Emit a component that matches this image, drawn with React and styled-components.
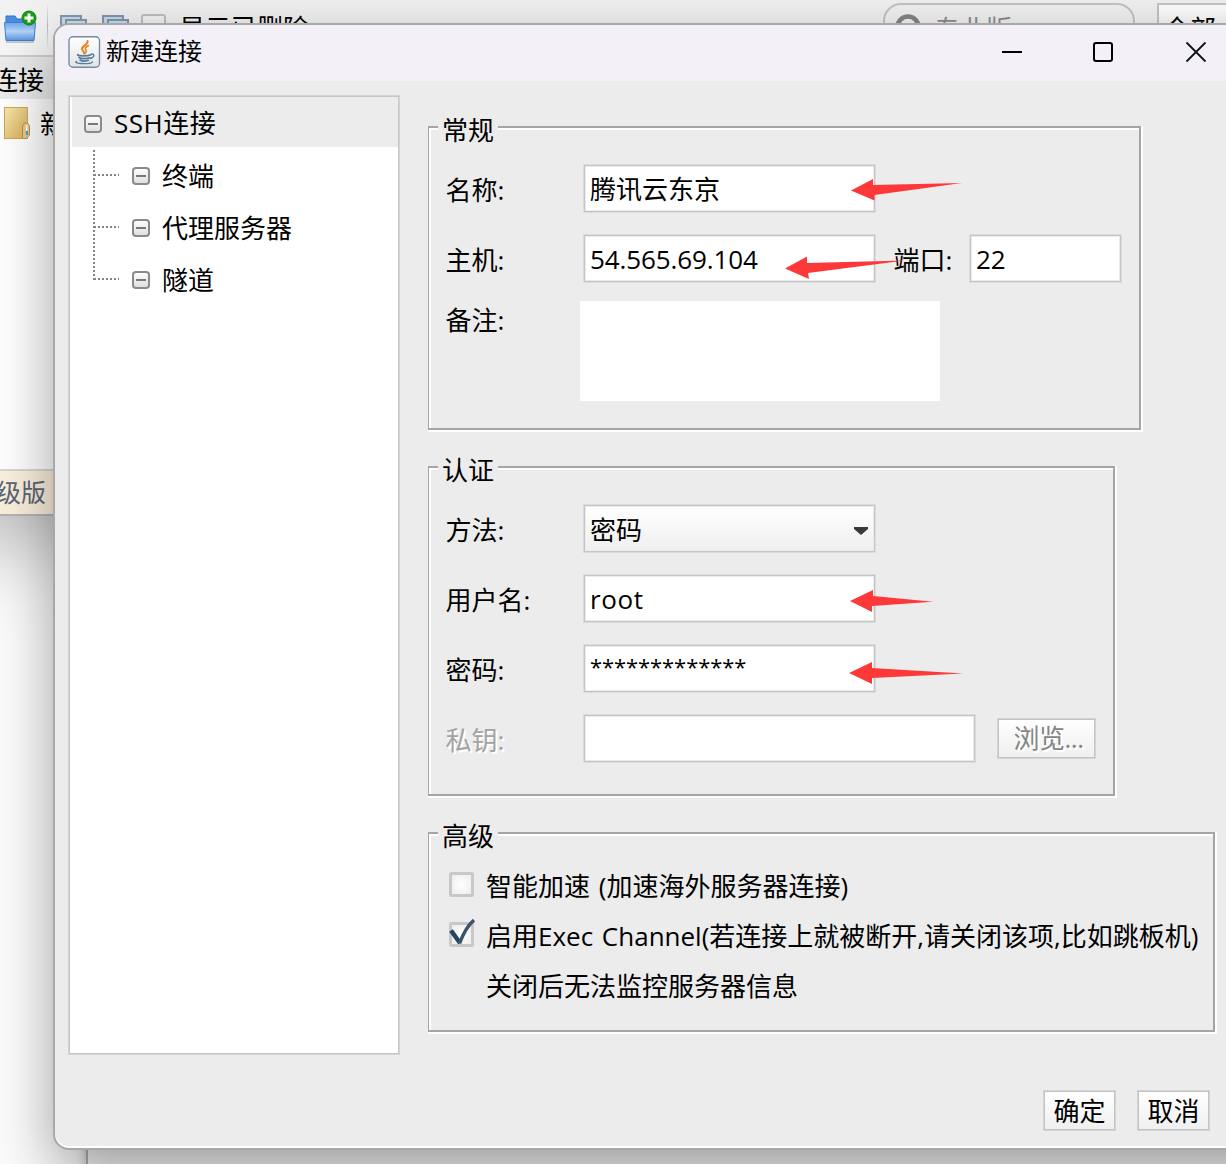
import React, { Component } from 'react'
import styled, { createGlobalStyle } from 'styled-components'

const GlobalStyle = createGlobalStyle`
  * {
    box-sizing: border-box;
  }

  body {
    margin: 0;
    overflow: hidden;
    font-family: "Open Sans", "Noto Sans CJK SC", sans-serif;
    font-size: 26px;
    color: #000;
  }
`

const Desktop = styled.div`
  background: #fcfcfc;
  height: 1164px;
  overflow: hidden;
  position: relative;
  width: 1226px;
`

const MainWindow = styled.div`
  background: #fff;
  border-bottom: 2px solid #b4b4b4;
  box-shadow: 0 28px 80px rgba(0, 0, 0, 0.26);
  display: flex;
  flex-direction: column;
  height: 516px;
  margin-left: -60px;
  padding-left: 60px;
  width: 1400px;
`

const LowerWindow = styled.div`
  background: #f6f6f6;
  border-left: 2px solid #b0b0b0;
  box-shadow: 0 0 10px rgba(0, 0, 0, 0.25);
  height: 700px;
  margin: 84px 0 0 86px;
`

const MainToolbar = styled.div`
  background: linear-gradient(#f1f1f1, #f6f6f6);
  border-bottom: 2px solid #cfcfcf;
  display: flex;
  height: 57px;
  line-height: 57px;
  padding-left: 4px;
  white-space: nowrap;

  > svg {
    flex: none;
  }
`

const ToolbarDivider = styled.div`
  background: linear-gradient(transparent, #b5bcc6 50%, transparent);
  height: 48px;
  margin: 2px 12px 0 9px;
  width: 1px;
`

const ToolbarCheck = styled.div`
  background: #f5f5f5;
  border: 2px solid #c0c0c0;
  border-radius: 3px;
  height: 25px;
  margin: 14px 13px 0 -3px;
  width: 25px;
`

const SearchBox = styled.div`
  border: 2px solid #c4c4c4;
  border-radius: 18px;
  color: #8d8d8d;
  display: flex;
  height: 48px;
  line-height: 49px;
  margin: 3px 0 0 auto;
  padding-left: 10px;
  width: 252px;

  svg {
    margin-right: 11px;
  }
`

const ScopeSelect = styled.div`
  background: linear-gradient(#fff, #f2f2f2);
  border: 2px solid #c4c4c4;
  height: 48px;
  line-height: 49px;
  margin: 3px 3px 0 22px;
  padding-left: 5px;
  width: 180px;
`

const ListHeader = styled.div`
  background: #ebebeb;
  height: 42px;
  line-height: 46px;
  text-indent: -8px;
`

const ListItem = styled.div`
  align-items: center;
  display: flex;
  gap: 9px;
  height: 48px;
  padding-left: 4px;
`

const UpgradeBar = styled.div`
  background: #fbf0dc;
  border-top: 2px solid #d6d6d6;
  color: #5c6478;
  font-size: 25px;
  height: 45px;
  line-height: 42px;
  margin-top: auto;
  text-indent: -4px;
`

const Dialog = styled.div`
  background: #ececec;
  background-clip: padding-box;
  border: 2px solid #a8a8a8;
  border-radius: 16px;
  box-shadow: inset 0 -2px 0 #fff, 0 22px 60px rgba(0, 0, 0, 0.37);
  display: flex;
  flex-direction: column;
  height: 1127px;
  left: 53px;
  overflow: hidden;
  position: absolute;
  top: 23px;
  width: 1260px;
`

const TitleBar = styled.div`
  align-items: center;
  background: #f3f1f7;
  display: flex;
  flex: none;
  font-size: 24px;
  height: 56px;
  padding: 0 104px 2px 13px;
`

const Title = styled.span`
  flex: 1;
  line-height: 34px;
  margin: -2px 0 0 5px;
`

const WindowButtons = styled.div`
  display: flex;
  gap: 70px;
`

const DialogBody = styled.div`
  display: flex;
  gap: 28px;
  padding: 14px 0 0 13px;
`

const Tree = styled.div`
  background: #fff;
  border: 1px solid #d4d4d4;
  box-shadow: inset 0 0 0 1px #c6c6c6;
  height: 960px;
  padding: 1px 1px 0 3px;
  width: 332px;
`

const TreeRoot = styled.div`
  align-items: center;
  background: #ececec;
  display: flex;
  gap: 12px;
  height: 50px;
  padding: 3px 0 0 12px;
`

const TreeText = styled.span`
  letter-spacing: ${props => props.$spacing || 0}px;
  margin-top: -3px;
`

const TreeBranch = styled.div`
  display: grid;
  grid-template-columns: 26px 1fr;
  grid-template-rows: repeat(3, 52px);
  column-gap: 13px;
  padding: 3px 0 0 21px;
`

const TreeLines = styled.svg`
  grid-row: 1 / 4;
`

const TreeLeaf = styled.div`
  align-items: center;
  display: flex;
  gap: 12px;
`

const Panels = styled.div`
  display: flex;
  flex-direction: column;
  padding-top: 31px;
`

const Group = styled.div`
  border: 2px solid #a5a5a5;
  border-left-width: 1px;
  box-shadow: inset 2px 2px 0 #fff, 2px 2px 0 #fff, 0 2px 0 #fff, 2px 0 0 #fff;
  height: ${props => props.$height}px;
  margin-bottom: 36px;
  width: ${props => props.$width}px;
`

const Legend = styled.div`
  background: #ececec;
  height: 30px;
  line-height: 31px;
  margin: -13px 0 0 9px;
  padding-left: 4px;
  width: 60px;
`

const Rows = styled.div`
  display: flex;
  flex-direction: column;
  gap: 21px;
  padding: 19px 0 0 17px;
`

const Row = styled.div`
  align-items: center;
  display: flex;
  height: 49px;
`

const Label = styled.div`
  color: ${props => props.$disabled ? '#a3a3a3' : '#000'};
  flex: none;
  line-height: 48px;
  padding-top: 2px;
  text-indent: -0.5px;
  text-shadow: ${props => props.$disabled ? '2px 2px 0 #fff' : 'none'};
  width: ${props => props.$width || 137}px;
`

const Field = styled.div`
  background: #fff;
  border: 1px solid #dcdcdc;
  box-shadow: inset 0 0 0 1px #c5c5c5, inset 0 0 0 2px #ebebeb;
  display: flex;
  flex: none;
  height: 49px;
  letter-spacing: ${props => props.$spacing || 0}px;
  line-height: 49px;
  padding-left: 6px;
  width: ${props => props.$width || 293}px;
`

const Select = styled(Field)`
  align-items: center;
  background: linear-gradient(#fff, #efefef);
  justify-content: space-between;
  line-height: 46px;
  padding: 3px 7px 0 6px;

  svg {
    margin-top: 2px;
  }
`

const Masked = styled.span`
  font-size: 22px;
  letter-spacing: -0.1px;
  line-height: 43px;
`

const Notes = styled.div`
  background: #fff;
  height: 100px;
  width: 360px;
`

const NotesRow = styled.div`
  display: flex;
  margin-top: -3px;

  ${Label} {
    line-height: 34px;
    width: 134px;
  }
`

const PortLabel = styled(Label)`
  margin-left: 18px;
`

const Button = styled.button`
  background: linear-gradient(#fff, #efefef);
  border: 1px solid #d4d4d4;
  box-shadow: inset 0 0 0 1px #c4c4c4;
  color: ${props => props.disabled ? '#858585' : '#000'};
  font: inherit;
  height: 41px;
  line-height: 38px;
  padding: 0;
  text-shadow: ${props => props.disabled ? '2px 2px 0 #fff' : 'none'};
  width: ${props => props.$width || 73}px;
`

const BrowseButton = styled(Button)`
  letter-spacing: -0.5px;
  line-height: 36px;
  margin: 0 0 0 21px;
  padding: 0 0 2px 4px;
`

const Options = styled.div`
  display: flex;
  flex-direction: column;
  padding: 10px 0 0 20px;
`

const Option = styled.div`
  align-items: center;
  display: flex;
  gap: 11px;
  height: 50px;
  line-height: 50px;
  white-space: nowrap;
  word-spacing: 2px;

  svg {
    flex: none;
    margin-top: -4px;
  }
`

const OptionHint = styled.div`
  line-height: 50px;
  padding-left: 37px;
`

const DialogFooter = styled.div`
  display: flex;
  gap: 21px;
  justify-content: flex-end;
  margin-top: 22px;
  padding-right: 101px;
`

const Arrows = styled.svg`
  left: 0;
  pointer-events: none;
  position: absolute;
  top: 0;
`

const NewFolderIcon = () => (
  <svg width="34" height="46" viewBox="4 0 34 46">
    <defs>
      <linearGradient id="blue" x1="0" y1="0" x2="0" y2="1">
        <stop offset="0" stopColor="#6ea6e8" />
        <stop offset=".5" stopColor="#b4d3f8" />
        <stop offset="1" stopColor="#5b95e0" />
      </linearGradient>
    </defs>
    <rect x="6" y="40" width="28" height="3" fill="#c9c9c9" />
    <path d="M6 22V16h9l2 3h15v6z" fill="#4c8ee0" stroke="#2d74cd" />
    <path d="M4.500 22.500h31l-1.500 18H6z" fill="url(#blue)" stroke="#3b7fd6" />
    <circle cx="29" cy="18" r="7" fill="#16a016" stroke="#0b8a0b" />
    <path d="M29 13.500v9M24.500 18h9" stroke="#fff" strokeWidth="3" />
  </svg>
)

const StackIcon = ({ plus }) => (
  <svg width="42" height="44" viewBox="0 0 42 44">
    <path d="M1 38V16h20v4" fill="#c4dbe8" stroke="#8597ae" strokeWidth="2" />
    <rect x="6" y="20" width="20" height="20" fill="#c3e3f0" stroke="#8597ae" strokeWidth="2" />
    {plus && <path d="M16 23v14M10 30h12" stroke="#345a7c" strokeWidth="2" />}
  </svg>
)

const FolderIcon = () => (
  <svg width="27" height="33" viewBox="0 0 27 33">
    <defs>
      <linearGradient id="gold" x1="0" y1="0" x2="1" y2="1">
        <stop offset="0" stopColor="#fae7ab" />
        <stop offset="1" stopColor="#d5ae58" />
      </linearGradient>
    </defs>
    <rect x=".5" y=".5" width="23" height="31" fill="url(#gold)" stroke="#cba75a" />
    <path d="M18.500 31.500V19l2-3h3l2 3v9l-3 3.500z" fill="#e6c987" stroke="#bd9545" />
    <path d="M22 18h1.500v7H22z" fill="#fff" />
    <path d="M22 24h2v4h-2z" fill="#25a9e8" />
  </svg>
)

const JavaIcon = () => (
  <svg width="33" height="33" viewBox="0 0 33 33">
    <defs>
      <linearGradient id="tile" x1="0" y1="0" x2="0" y2="1">
        <stop offset="0" stopColor="#fff" />
        <stop offset="1" stopColor="#e3e5e5" />
      </linearGradient>
    </defs>
    <rect x="1" y=".8" width="30.500" height="30.500" rx="4" fill="url(#tile)" stroke="#718ca3" strokeWidth="1.400" />
    <g fill="none" strokeLinecap="round">
      <path d="M19.500 5c1 4-6 5-5.500 8 .2 1.600 2.500 2.500 2 4.500" stroke="#ee7d1c" strokeWidth="2" />
      <path d="M20.500 9.500c-3 1.500-4 3-2.700 4.500 1 1.300.2 2.500-1 3.500" stroke="#ee7d1c" strokeWidth="1.500" />
      <path d="M10 18.500c-3 1.300 9 2.200 13 .2M11 21.500c2 1.500 8 1.300 11 .2M12 24c2 1.300 6 1.200 8.500.3" stroke="#567d9c" strokeWidth="1.600" />
      <path d="M23.500 18c3-.5 3.500 3-1 4.500" stroke="#567d9c" strokeWidth="1.400" />
      <path d="M8.500 25.500c-4 2 13 3.300 16 .4" stroke="#567d9c" strokeWidth="1.400" />
    </g>
  </svg>
)

const CollapseIcon = () => (
  <svg width="18" height="18" viewBox="0 0 18 18">
    <defs>
      <linearGradient id="knob" x1="0" y1="0" x2="0" y2="1">
        <stop offset="0" stopColor="#fff" />
        <stop offset="1" stopColor="#dedede" />
      </linearGradient>
    </defs>
    <rect x="1" y="1" width="16" height="16" rx="3" fill="url(#knob)" stroke="#8a8a8a" strokeWidth="2" />
    <path d="M4 9h10" stroke="#777" strokeWidth="2" />
  </svg>
)

const CheckIcon = ({ checked }) => (
  <svg width="26" height="32" viewBox="0 0 26 32">
    <defs>
      <radialGradient id="box">
        <stop offset="0" stopColor="#fff" />
        <stop offset="1" stopColor="#f0f0f0" />
      </radialGradient>
    </defs>
    <rect x="1.500" y="5.500" width="22" height="22" rx="1" fill="url(#box)" stroke="#c8c8c8" strokeWidth="3" />
    {checked && <path d="M2 12.500L11 25" stroke="#26465f" strokeWidth="4.500" />}
    {checked && <path d="M10.500 25.500C14 16 19 7 25 2" fill="none" stroke="#3d5468" strokeWidth="3.500" />}
  </svg>
)

const arrows = [
  '851,190.500 873,179 873,185 962,183 874.500,195 874.500,200.500',
  '785,268.500 807,256.500 807,263 905,260.500 808,273 809,279',
  '850,601 873,590 873,596 933,601.700 872,606 872,612',
  '849,673 872,662 872,668 963,673.500 872,678 872,684'
]

class App extends Component {
  renderBackground() {
    return (
      <>
        <MainWindow>
          <MainToolbar>
            <NewFolderIcon />
            <ToolbarDivider />
            <StackIcon />
            <StackIcon plus />
            <ToolbarCheck />
            显示已删除
            <SearchBox>
              <svg width="28" height="44" viewBox="0 0 28 44">
                <circle cx="13" cy="22" r="10.500" fill="none" stroke="#858585" strokeWidth="4.500" />
              </svg>
              专业版
            </SearchBox>
            <ScopeSelect>全部</ScopeSelect>
          </MainToolbar>
          <ListHeader>连接</ListHeader>
          <ListItem><FolderIcon />新</ListItem>
          <UpgradeBar>级版</UpgradeBar>
        </MainWindow>
        <LowerWindow />
      </>
    )
  }

  renderTree() {
    return (
      <Tree>
        <TreeRoot><CollapseIcon /><TreeText $spacing={0.5}>SSH连接</TreeText></TreeRoot>
        <TreeBranch>
          <TreeLines width="26" height="156">
            <path d="M1 0V132M1 25H26M1 77H26M1 129H26" fill="none" stroke="#858585" strokeWidth="2" strokeDasharray="2 2" />
          </TreeLines>
          {['终端', '代理服务器', '隧道'].map(name => (
            <TreeLeaf key={name}><CollapseIcon /><TreeText>{name}</TreeText></TreeLeaf>
          ))}
        </TreeBranch>
      </Tree>
    )
  }

  render() {
    return (
      <Desktop>
        <GlobalStyle />
        {this.renderBackground()}
        <Dialog>
          <TitleBar>
            <JavaIcon />
            <Title>新建连接</Title>
            <WindowButtons>
              <svg width="22" height="22"><path d="M1 11H21" stroke="#000" strokeWidth="2" /></svg>
              <svg width="22" height="22"><rect x="1" y="2" width="18" height="18" rx="2" fill="none" stroke="#000" strokeWidth="2" /></svg>
              <svg width="22" height="22"><path d="M1.500 1.500l19 19M20.500 1.500l-19 19" stroke="#111" strokeWidth="1.800" /></svg>
            </WindowButtons>
          </TitleBar>
          <DialogBody>
            {this.renderTree()}
            <Panels>
              <Group $width={713} $height={304}>
                <Legend>常规</Legend>
                <Rows>
                  <Row>
                    <Label>名称:</Label>
                    <Field>腾讯云东京</Field>
                  </Row>
                  <Row>
                    <Label>主机:</Label>
                    <Field $spacing={-0.1}>54.565.69.104</Field>
                    <PortLabel $width={75}>端口:</PortLabel>
                    <Field $width={153}>22</Field>
                  </Row>
                  <NotesRow>
                    <Label>备注:</Label>
                    <Notes />
                  </NotesRow>
                </Rows>
              </Group>
              <Group $width={687} $height={330}>
                <Legend>认证</Legend>
                <Rows>
                  <Row>
                    <Label>方法:</Label>
                    <Select>
                      密码
                      <svg width="14" height="8"><path d="M0 0H14V2L7 8L0 2z" fill="#3a3a3a" /></svg>
                    </Select>
                  </Row>
                  <Row>
                    <Label>用户名:</Label>
                    <Field $spacing={0.6}>root</Field>
                  </Row>
                  <Row>
                    <Label>密码:</Label>
                    <Field><Masked>*************</Masked></Field>
                  </Row>
                  <Row>
                    <Label $disabled>私钥:</Label>
                    <Field $width={393} />
                    <BrowseButton $width={99} disabled>浏览...</BrowseButton>
                  </Row>
                </Rows>
              </Group>
              <Group $width={787} $height={200}>
                <Legend>高级</Legend>
                <Options>
                  <Option><CheckIcon />智能加速 (加速海外服务器连接)</Option>
                  <Option><CheckIcon checked />启用Exec Channel(若连接上就被断开,请关闭该项,比如跳板机)</Option>
                  <OptionHint>关闭后无法监控服务器信息</OptionHint>
                </Options>
              </Group>
            </Panels>
          </DialogBody>
          <DialogFooter>
            <Button>确定</Button>
            <Button>取消</Button>
          </DialogFooter>
        </Dialog>
        <Arrows width="1226" height="1164">
          {arrows.map(points => <polygon key={points} points={points} fill="#fd3838" />)}
        </Arrows>
      </Desktop>
    )
  }
}

export default App
